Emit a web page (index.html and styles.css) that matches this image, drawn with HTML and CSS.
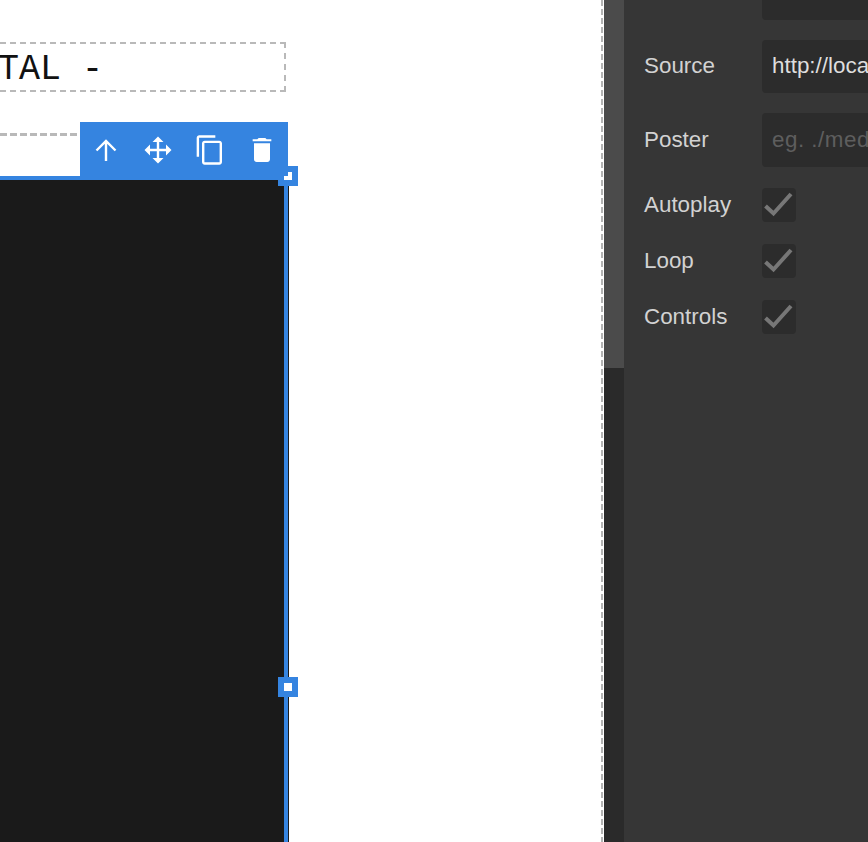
FILE: index.html
```html
<!DOCTYPE html>
<html lang="en">
<head>
<meta charset="utf-8">
<title>Video block editor</title>
<link rel="stylesheet" href="styles.css">
</head>
<body>
<div class="app">
  <main class="canvas">
    <div class="title-box"><span class="title-text">TAL -</span></div>
    <section class="wrap">
      <div class="video">
        <div class="toolbar">
          <button class="tool" type="button" aria-label="Up">
            <svg viewBox="0 0 32 32" width="32" height="32"><path d="M16 27V7M6.500 16.500L16 7l9.500 9.500" fill="none" stroke="#fff" stroke-width="2.400"/></svg>
          </button>
          <button class="tool" type="button" aria-label="Move">
            <svg viewBox="0 0 32 32" width="32" height="32"><path d="M16 7v18M7 16h18" stroke="#fff" stroke-width="2.400"/><path d="M16 2.500l5.500 5.500h-11zM16 29.500l-5.500-5.500h11zM2.500 16L8 10.500v11zM29.500 16L24 21.500v-11z" fill="#fff"/></svg>
          </button>
          <button class="tool" type="button" aria-label="Copy">
            <svg viewBox="0 0 24 24" width="32" height="32"><path fill="#fff" d="M16 1H4c-1.100 0-2 .9-2 2v14h1.800V2.800H16V1zm3 4H8c-1.100 0-2 .9-2 2v14c0 1.100.9 2 2 2h11c1.100 0 2-.9 2-2V7c0-1.100-.9-2-2-2zm.2 16.200H7.800V6.800h11.400v14.400z"/></svg>
          </button>
          <button class="tool" type="button" aria-label="Delete">
            <svg viewBox="0 0 24 24" width="32" height="32"><path fill="#fff" d="M6 19c0 1.100.9 2 2 2h8c1.100 0 2-.9 2-2V7H6v12zM19 4h-3.500l-1-1h-5l-1 1H5v1.500h14V4z"/></svg>
          </button>
        </div>
        <span class="handle handle-corner"><i class="notch"></i></span>
        <span class="handle handle-mid"><i class="dot"></i></span>
      </div>
    </section>
  </main>
  <div class="scrollbar"><div class="thumb"></div></div>
  <aside class="panel">
    <div class="fields">
      <div class="row row-input"><label class="label">Provider</label><div class="input">HTML5 Source</div></div>
      <div class="row row-input"><label class="label">Source</label><div class="input">http://localhost/media/video.mp4</div></div>
      <div class="row row-input"><label class="label">Poster</label><div class="input placeholder">eg. ./media/poster.png</div></div>
      <div class="row row-check"><label class="label">Autoplay</label><span class="check"><svg viewBox="0 0 34 34" width="34" height="34"><path d="M3.500 18l8 7.500L29 6" fill="none" stroke="#777" stroke-width="4"/></svg></span></div>
      <div class="row row-check"><label class="label">Loop</label><span class="check"><svg viewBox="0 0 34 34" width="34" height="34"><path d="M3.500 18l8 7.500L29 6" fill="none" stroke="#777" stroke-width="4"/></svg></span></div>
      <div class="row row-check"><label class="label">Controls</label><span class="check"><svg viewBox="0 0 34 34" width="34" height="34"><path d="M3.500 18l8 7.500L29 6" fill="none" stroke="#777" stroke-width="4"/></svg></span></div>
    </div>
  </aside>
</div>
</body>
</html>
```
FILE: styles.css
```css
* { box-sizing: border-box; }
html, body { margin: 0; height: 100%; overflow: hidden; background: #fff; }
.app { display: flex; width: 868px; height: 842px; overflow: hidden; }

.canvas { width: 604px; height: 842px; flex: none; padding-top: 42px; position: relative; overflow: hidden; background: #fff; }
.canvas::after { content: ""; position: absolute; top: 0; bottom: 0; left: 601px; width: 2px; background: repeating-linear-gradient(to bottom, #b4b4b4 0 6px, #fff 6px 9px); }

.title-box { width: 286px; height: 50px; border: 2px dashed #b9b9b9; border-left: 0; display: flex; align-items: center; overflow: hidden; }
.title-text { display: inline-block; font-family: "Liberation Mono", monospace; font-size: 35px; line-height: 46px; color: #111; margin-left: -2px; padding-top: 3px; white-space: pre; transform: scaleY(1.08); }

.wrap { margin-top: 41px; width: 286px; height: 720px; padding-top: 43px; background: repeating-linear-gradient(to right, #b9b9b9 0 7px, transparent 7px 10px) top left / 100% 3px no-repeat; }
.video { position: relative; width: 288px; height: 666px; background: #1a1a1a; border-top: 4px solid #3584e0; border-right: 4px solid #3584e0; box-shadow: 1px 0 0 #1a1a1a; }

.toolbar { position: absolute; right: -4px; top: -58px; width: 208px; height: 58px; display: flex; background: #3584e0; padding-bottom: 2px; }
.tool { width: 52px; flex: none; border: 0; padding: 0; background: transparent; display: flex; align-items: center; justify-content: center; }
.tool svg { display: block; }

.handle { position: absolute; left: 278px; width: 20px; height: 20px; background: #3584e0; }
.handle-corner { top: -14px; }
.handle-mid { top: 497px; }
.notch { position: absolute; left: 6px; top: 6px; width: 8px; height: 8px; background: linear-gradient(to right, #3584e0 0 4px, #fff 4px) top / 100% 4px no-repeat, linear-gradient(#fff, #fff) bottom / 100% 4px no-repeat; }
.dot { position: absolute; left: 6px; top: 6px; width: 8px; height: 8px; background: #fff; }

.scrollbar { width: 20px; height: 842px; flex: none; background: #2a2a2a; }
.thumb { height: 368px; background: #4b4b4b; }

.panel { flex: 1; min-width: 0; height: 842px; background: #363636; overflow: hidden; padding-left: 20px; font-family: "Liberation Sans", Arial, sans-serif; font-size: 22.400px; color: #d2d2d2; }
.fields { margin-top: -36px; display: flex; flex-direction: column; }
.row { display: flex; align-items: center; }
.row-input { height: 53px; margin-bottom: 20px; }
.row-input:nth-child(1) { height: 56px; }
.row-input:nth-child(2) .label, .row-input:nth-child(2) .input { padding-bottom: 2px; }
.row-input:nth-child(3) { height: 54px; margin-bottom: 21px; }
.row-check { height: 34px; margin-bottom: 22px; }
.label { width: 118px; flex: none; }
.input { width: 300px; height: 100%; flex: none; background: #2c2c2c; border-radius: 4px; padding: 0 10px; display: flex; align-items: center; white-space: nowrap; color: #dedede; }
.placeholder { color: #5e5e5e; letter-spacing: 0.500px; }
.check { width: 34px; height: 34px; flex: none; background: #2c2c2c; border-radius: 4px; display: block; }
.check svg { display: block; }
```
